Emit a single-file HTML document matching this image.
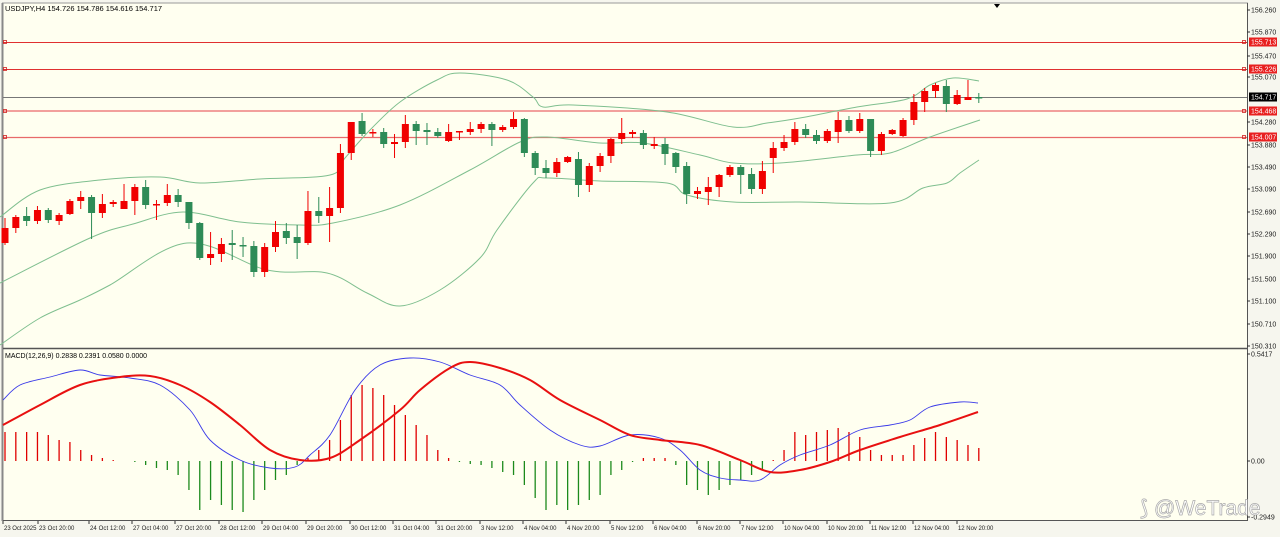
<!DOCTYPE html>
<html><head><meta charset="utf-8"><style>
html,body{margin:0;padding:0;width:1280px;height:537px;overflow:hidden;background:#fdfdf3;}
svg{display:block;font-family:"Liberation Sans",Tahoma,sans-serif;}
</style></head><body>
<svg id="s" width="1280" height="537" xmlns="http://www.w3.org/2000/svg">
<rect x="0" y="0" width="1280" height="537" fill="#f6f6ee"/>
<rect x="3" y="3" width="1244" height="518" fill="#fffff0"/>
<line x1="2" y1="3" x2="1248" y2="3" stroke="#999" stroke-width="1"/>
<line x1="2.5" y1="3" x2="2.5" y2="521" stroke="#888" stroke-width="2"/>
<line x1="1247.5" y1="3" x2="1247.5" y2="521" stroke="#555"/>
<line x1="3" y1="348.5" x2="1248" y2="348.5" stroke="#555" stroke-width="1.5"/>
<line x1="3" y1="520.5" x2="1248" y2="520.5" stroke="#555"/>
<polygon points="994,4 1000,4 997,8" fill="#000"/>
<g id="g"></g>
<text x="5" y="11" font-size="7.5" fill="#000">USDJPY,H4  154.726 154.786 154.616 154.717</text>
<text x="5" y="358" font-size="7" fill="#000">MACD(12,26,9) 0.2838 0.2391 0.0580 0.0000</text>
<text x="1140" y="515" font-size="21" fill="#fff" stroke="#aaa" stroke-width="0.7">⟆ @WeTrade</text>
</svg>
<script>
var g=document.getElementById('g'),h='';
function L(a,c,w){var d='M'+a[0][0]+','+a[0][1];
for(var i=0;i<a.length-1;i++){var p0=a[i-1]||a[i],p1=a[i],p2=a[i+1],p3=a[i+2]||p2;
var c1x=p1[0]+(p2[0]-p0[0])/6,c1y=p1[1]+(p2[1]-p0[1])/6,c2x=p2[0]-(p3[0]-p1[0])/6,c2y=p2[1]-(p3[1]-p1[1])/6;
d+=' C'+c1x.toFixed(1)+','+c1y.toFixed(1)+' '+c2x.toFixed(1)+','+c2y.toFixed(1)+' '+p2[0]+','+p2[1];}
h+='<path fill="none" stroke="'+c+'" stroke-width="'+w+'" d="'+d+'"/>';}
h+='<line x1="3" y1="42.5" x2="1247" y2="42.5" stroke="#e03030"/>';
h+='<line x1="3" y1="69.5" x2="1247" y2="69.5" stroke="#e03030"/>';
h+='<line x1="3" y1="97.5" x2="1247" y2="97.5" stroke="#777"/>';
h+='<line x1="3" y1="111" x2="1247" y2="111" stroke="#ee8080" stroke-width="1.6"/>';
h+='<line x1="3" y1="137.5" x2="1247" y2="137.5" stroke="#e86a6a" stroke-width="1.3"/>';
[42,69,111,137].forEach(function(y){h+='<rect x="3.5" y="'+(y-1.5)+'" width="3" height="3" fill="none" stroke="#d02020" stroke-width="0.8"/><rect x="1242.5" y="'+(y-1.5)+'" width="3" height="3" fill="none" stroke="#d02020" stroke-width="0.8"/>';});
L([[0,217],[40,190],[100,180],[160,177],[200,183],[260,179],[330,175],[345,158],[370,130],[400,102],[437,80],[460,73],[507,80],[533,97],[543,107],[573,105],[667,112],[733,127],[767,123],[800,118],[857,107],[907,99],[930,85],[953,78],[979,81]],'#7fbf8f',1);
L([[0,283],[90,238],[133,224],[183,212],[240,222],[300,225],[333,223],[400,205],[470,170],[520,142],[547,137],[600,143],[643,143],[700,155],[733,163],[780,163],[857,155],[890,153],[930,137],[980,120]],'#7fbf8f',1);
L([[0,345],[40,318],[80,300],[110,285],[187,243],[267,270],[327,273],[367,293],[400,306],[440,290],[480,258],[497,230],[533,183],[547,178],[600,181],[667,183],[687,195],[733,202],[800,202],[890,203],[923,188],[947,183],[960,173],[979,160]],'#7fbf8f',1);
var C=[['r',228,243,218,245],['r',217,228,215,233],['g',216,221,207,226],['r',210,221,206,224],['g',210,220,208,223],['r',215,221,213,225],['r',201,214,199,215],['r',197,201,191,209],['g',197,213,195,239],['r',204,213,194,218],['r',202,204,200,207],['r',201,209,184,209],['r',187,201,184,215],['g',187,205,180,209],['r',204,205,200,220],['r',195,203,184,206],['g',195,202,189,207],['g',202,223,202,229],['g',223,258,222,260],['r',254,258,232,265],['r',244,254,238,262],['g',243,245,230,260],['g',245,246,237,257],['g',246,272,241,277],['r',247,272,243,277],['r',232,247,221,252],['g',231,238,223,244],['g',237,243,225,259],['r',211,243,191,245],['g',211,216,197,223],['r',208,216,187,242],['r',153,208,144,213],['r',122,153,122,160],['g',121,134,113,136],['r',132,133,129,137],['g',132,144,128,148],['r',142,144,134,158],
['r',124,142,115,148],['g',124,131,121,145],['g',130,132,123,145],['g',132,136,128,138],['r',132,141,124,142],['r',131,132,131,140],['r',129,132,122,135],['r',124,129,122,133],['g',124,130,122,146],['r',127,130,125,132],['r',119,127,112,129],['g',119,153,118,157],['g',153,168,151,175],['g',168,173,160,178],['r',162,173,158,177],['r',157,162,156,163],['g',159,185,152,197],['r',166,185,163,192],['r',156,166,153,172],['r',139,156,138,163],['r',133,139,118,144],['r',132,134,130,138],['g',133,145,130,149],['r',144,146,137,149],['g',144,154,138,165],['g',153,167,152,173],['g',166,194,162,204],['r',191,194,187,199],['r',187,192,177,205],['r',175,187,174,197],['r',167,175,165,177],['g',167,175,165,194],['g',174,189,168,194],['r',171,189,161,194],['r',148,158,142,173],['r',142,148,135,151],
['r',129,142,122,145],['g',129,135,124,138],['g',135,141,130,144],['r',131,141,129,143],['r',120,132,112,143],['g',120,131,116,133],['r',119,131,113,133],['g',119,151,119,157],['r',134,151,132,155],['r',130,134,129,135],['r',120,136,118,137],['r',102,120,94,125],['r',91,102,88,112],['r',85,91,83,98],['g',86,104,80,112],['r',95,104,90,105],['r',97,100,80,100],['g',97,98,93,103]];
C.forEach(function(c,i){var x=5+i*10.82,col=c[0]=='r'?'#f00000':'#2e8b57',t=c[1],b=Math.max(c[2],c[1]+1.5);
h+='<line x1="'+x+'" y1="'+c[3]+'" x2="'+x+'" y2="'+c[4]+'" stroke="'+col+'"/>';
h+='<rect x="'+(x-3.5)+'" y="'+t+'" width="7" height="'+(b-t)+'" fill="'+col+'"/>';});
var H=[432,432,432,432,435,440,442,450,455,458,460,461,462,465,468,470,475,490,510,500,505,510,512,500,490,480,475,465,458,450,440,420,395,385,388,395,405,415,425,435,450,458,462,464,465,468,472,475,485,498,510,505,510,505,500,495,475,470,462,458,458,458,465,485,490,495,490,485,480,475,470,460,450,432,435,432,430,428,432,437,450,455,455,455,445,438,432,437,440,445,448];
H.forEach(function(v,i){var x=5+i*10.82;var col=v<461?'#e00000':'#1c8a1c';h+='<line x1="'+x+'" y1="461" x2="'+x+'" y2="'+v+'" stroke="'+col+'" stroke-width="1.3"/>';});
L([[3,400],[20,385],[50,377],[80,370],[100,375],[130,378],[160,385],[190,410],[210,440],[240,460],[270,468],[295,467],[310,455],[330,435],[355,390],[380,365],[410,358],[440,362],[470,375],[500,385],[520,405],[550,430],[580,445],[600,446],[630,435],[660,438],[680,450],[700,470],[720,478],[740,480],[760,480],[780,465],[800,455],[830,445],[860,430],[890,425],[910,420],[930,407],[960,402],[978,403]],'#3a3ae8',0.9);
L([[3,425],[40,405],[80,385],[120,377],[150,376],[180,385],[210,402],[240,425],[270,450],[300,460],[330,458],[360,440],[400,410],[420,390],[450,368],[470,362],[500,368],[530,380],[560,400],[600,420],[630,435],[660,440],[700,445],[740,460],[770,472],[800,470],[830,462],[860,450],[900,437],[940,425],[978,412]],'#e81010',2);
[['156.260',10],['155.870',32],['155.470',56],['155.070',77],['154.280',122],['153.880',145],['153.490',167],['153.090',189],['152.690',212],['152.290',234],['151.900',256],['151.500',279],['151.100',301],['150.710',324],['150.310',346],['0.5417',354],['0.00',461],['-0.2949',517]].forEach(function(a){
h+='<line x1="1247" y1="'+a[1]+'" x2="1250" y2="'+a[1]+'" stroke="#333"/><text x="1251" y="'+(a[1]+2.5)+'" font-size="7" fill="#222">'+a[0]+'</text>';});
[['155.713',42,'#e82020'],['155.226',69,'#e82020'],['154.717',97,'#000'],['154.468',111,'#e82020'],['154.007',137,'#e82020']].forEach(function(a){
h+='<rect x="1249" y="'+(a[1]-4.5)+'" width="28" height="9" fill="'+a[2]+'"/><text x="1251" y="'+(a[1]+2.5)+'" font-size="7" fill="#fff">'+a[0]+'</text>';});
[['23 Oct 2025',3],['23 Oct 20:00',38],['24 Oct 12:00',89],['27 Oct 04:00',132],['27 Oct 20:00',175],['28 Oct 12:00',219],['29 Oct 04:00',262],['29 Oct 20:00',306],['30 Oct 12:00',350],['31 Oct 04:00',393],['31 Oct 20:00',436],['3 Nov 12:00',480],['4 Nov 04:00',523],['4 Nov 20:00',566],['5 Nov 12:00',610],['6 Nov 04:00',653],['6 Nov 20:00',697],['7 Nov 12:00',740],['10 Nov 04:00',783],['10 Nov 20:00',827],['11 Nov 12:00',870],['12 Nov 04:00',913],['12 Nov 20:00',957]].forEach(function(a){
h+='<line x1="'+a[1]+'" y1="521" x2="'+a[1]+'" y2="524" stroke="#333"/><text x="'+(a[1]+1)+'" y="530" font-size="6" fill="#222" textLength="'+(a[0].length*2.95)+'">'+a[0]+'</text>';});
g.innerHTML=h;
</script>
</body></html>
